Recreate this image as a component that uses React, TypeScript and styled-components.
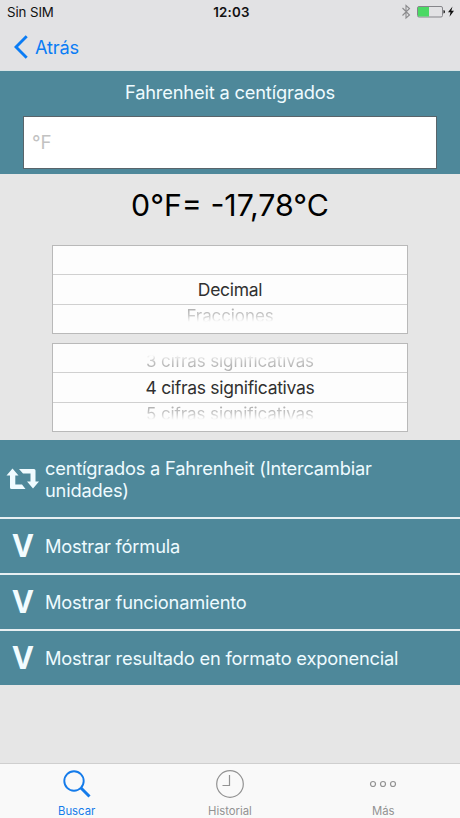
import React from "react";
import styled, { createGlobalStyle } from "styled-components";

const Global = createGlobalStyle`
  * { box-sizing: border-box; }
  body { margin: 0; background: #e6e6e6; }
`;

const Screen = styled.div`
  width: 460px;
  height: 818px;
  display: flex;
  flex-direction: column;
  background: #e6e6e6;
  font-family: Inter, "Liberation Sans", sans-serif;
  overflow: hidden;
`;

const TopArea = styled.header`
  height: 71px;
  background: #e2e2e4;
  border-bottom: 1px solid #d7e3e5;
`;

const StatusBar = styled.div`
  height: 24px;
  display: grid;
  grid-template-columns: 1fr auto 1fr;
  align-items: center;
  padding: 0 5px 0 7px;
  font-size: 13.3px;
  line-height: 24px;
  color: #111;
`;

const Carrier = styled.span`
  letter-spacing: -0.1px;
`;

const Clock = styled.span`
  padding-left: 1px;
  font-weight: 600;
  font-size: 13.3px;
  letter-spacing: 0.2px;
`;

const StatusIcons = styled.div`
  display: flex;
  justify-content: flex-end;
  align-items: center;
`;

const BackButton = styled.button`
  display: flex;
  align-items: center;
  gap: 7px;
  height: 46px;
  padding: 0 0 0 14px;
  border: 0;
  background: none;
  color: #0a7cf5;
  font: 400 18.2px/46px Inter, sans-serif;
  letter-spacing: -0.15px;
`;

const Converter = styled.section`
  height: 103px;
  background: #4e889a;
  padding: 9px 23px 0;
`;

const Title = styled.h1`
  margin: 0 0 12px;
  text-align: center;
  color: #eefbff;
  font-weight: 400;
  font-size: 18.3px;
  line-height: 24px;
  letter-spacing: -0.18px;
`;

const ValueInput = styled.input`
  display: block;
  width: 414px;
  height: 53px;
  padding: 0 8px;
  border: 1px solid #59646a;
  border-radius: 0;
  background: #fff;
  font: 400 18.7px Inter, sans-serif;
  outline: none;
  &::placeholder { color: #c2c2c2; opacity: 1; }
`;

const Result = styled.output`
  display: block;
  height: 71px;
  text-align: center;
  font-size: 30.3px;
  line-height: 63px;
  color: #000;
`;

const Picker = styled.div`
  width: 356px;
  height: 89px;
  margin: 0 auto 9px 52px;
  border: 1px solid #b9b9b9;
  background: #fdfdfd;
  display: grid;
  grid-template-rows: 28px 31px 28px;
`;

const Option = styled.div<{ $place: "above" | "current" | "below" }>`
  overflow: hidden;
  text-align: center;
  white-space: nowrap;
  font-size: ${(p) => (p.$place === "current" ? 17.5 : 17)}px;
  letter-spacing: ${(p) => (p.$place === "current" ? -0.3 : -0.1)}px;
  line-height: ${(p) => (p.$place === "above" ? 34 : p.$place === "below" ? 23 : 29)}px;
  color: ${(p) => (p.$place === "current" ? "#303030" : "transparent")};
  border-top: ${(p) => (p.$place === "current" ? "1px solid #d0d0d0" : "0")};
  border-bottom: ${(p) => (p.$place === "current" ? "1px solid #d0d0d0" : "0")};
  background-image: ${(p) =>
    p.$place === "above"
      ? "linear-gradient(to top, #b2b2b2 5px, #c8c8c8 11px, #fdfdfd 17px)"
      : p.$place === "below"
        ? "linear-gradient(to bottom, #b2b2b2 4px, #c8c8c8 10px, #fdfdfd 17px)"
        : "none"};
  -webkit-background-clip: ${(p) => (p.$place === "current" ? "border-box" : "text")};
  background-clip: ${(p) => (p.$place === "current" ? "border-box" : "text")};
`;

const Actions = styled.div`
  display: flex;
  flex-direction: column;
  gap: 2px;
  margin-top: -1px;
  background: #e7eff2;
`;

const Action = styled.button<{ $tall?: boolean }>`
  display: flex;
  align-items: center;
  height: ${(p) => (p.$tall ? 77 : 54)}px;
  padding: 0;
  border: 0;
  background: #4e889a;
  color: #eefbff;
  text-align: left;
  font: 400 18.3px/22px Inter, sans-serif;
`;

const ActionIcon = styled.span`
  width: 45px;
  flex: none;
  display: flex;
  justify-content: center;
  align-items: center;
`;

const ActionLabel = styled.span`
  width: 370px;
  letter-spacing: -0.21px;
`;

const Vee = styled.span`
  padding: 0 0 2px 1px;
  font: 700 32px/40px "Open Sans", sans-serif;
  color: #f2fcff;
`;

const TabBar = styled.nav`
  height: 55px;
  margin-top: auto;
  display: grid;
  grid-template-columns: repeat(3, 153.3px);
  background: #f9f9f9;
  border-top: 1px solid #cfcfcf;
`;

const Tab = styled.button<{ $active?: boolean }>`
  display: flex;
  flex-direction: column;
  align-items: center;
  padding: 4px 0 0;
  border: 0;
  background: none;
  color: ${(p) => (p.$active ? "#147bea" : "#929292")};
  font: 400 11.3px/14px Inter, sans-serif;
  letter-spacing: 0.02px;
`;

const TabIcon = styled.span`
  height: 32px;
  margin-bottom: 4px;
  display: flex;
  align-items: center;
`;

const SwapIcon = () => (
  <svg width="34" height="24" viewBox="0 0 34 24" fill="#f0fbff">
    <path d="M6.500 1.500 L12.500 8.500 H9.300 V17.500 H16 L19.500 22 H5.500 Q4 22 4 20.500 V8.500 H0.500Z" />
    <path d="M13 2 H28 Q29.500 2 29.500 3.500 V14.500 H33 L27 21.500 L21 14.500 H24.500 V6.500 H17Z" />
  </svg>
);

export default function App() {
  return (
    <>
      <Global />
      <Screen>
        <TopArea>
          <StatusBar>
            <Carrier>Sin SIM</Carrier>
            <Clock>12:03</Clock>
            <StatusIcons>
              <svg width="54" height="18" viewBox="401 3 54 18" fill="none">
                <path d="M402.500 8 L409.500 15 L406 18 V5.500 L409.500 8.500 L402.500 15.500" stroke="#8b8b8d" strokeWidth="1.100" />
                <rect x="417.500" y="6.500" width="25" height="10.500" rx="1.500" stroke="#85858a" />
                <path d="M418 7 H429 V16.500 H418Z" fill="#4bd964" />
                <path d="M443.500 10 Q445 10.300 445 11.800 T443.500 13.600Z" fill="#111" />
                <path d="M452.500 6.500 L448 12.300 H450.500 L449.500 16.800 L454 10.700 H451.300Z" fill="#111" />
              </svg>
            </StatusIcons>
          </StatusBar>
          <BackButton>
            <svg width="14" height="24" viewBox="0 0 14 24" fill="none">
              <path d="M12.700 1.300 L2 12 L12.700 22.700" stroke="currentColor" strokeWidth="2.900" />
            </svg>
            Atrás
          </BackButton>
        </TopArea>
        <Converter>
          <Title>Fahrenheit a centígrados</Title>
          <ValueInput placeholder="°F" aria-label="Fahrenheit" />
        </Converter>
        <Result>0°F= -17,78°C</Result>
        <Picker>
          <Option $place="above" />
          <Option $place="current">Decimal</Option>
          <Option $place="below">Fracciones</Option>
        </Picker>
        <Picker>
          <Option $place="above">3 cifras significativas</Option>
          <Option $place="current">4 cifras significativas</Option>
          <Option $place="below">5 cifras significativas</Option>
        </Picker>
        <Actions>
          <Action $tall>
            <ActionIcon><SwapIcon /></ActionIcon>
            <ActionLabel>centígrados a Fahrenheit (Intercambiar unidades)</ActionLabel>
          </Action>
          <Action>
            <ActionIcon><Vee>V</Vee></ActionIcon>
            <ActionLabel>Mostrar fórmula</ActionLabel>
          </Action>
          <Action>
            <ActionIcon><Vee>V</Vee></ActionIcon>
            <ActionLabel>Mostrar funcionamiento</ActionLabel>
          </Action>
          <Action>
            <ActionIcon><Vee>V</Vee></ActionIcon>
            <ActionLabel>Mostrar resultado en formato exponencial</ActionLabel>
          </Action>
        </Actions>
        <TabBar>
          <Tab $active>
            <TabIcon>
              <svg width="28" height="28" viewBox="0 0 28 28" fill="none" stroke="currentColor">
                <circle cx="11" cy="11" r="9.700" strokeWidth="1.900" />
                <path d="M18 18 L26.500 26.500" strokeWidth="3" />
              </svg>
            </TabIcon>
            Buscar
          </Tab>
          <Tab>
            <TabIcon>
              <svg width="28" height="28" viewBox="0 0 28 28" fill="none" stroke="currentColor">
                <circle cx="14" cy="14" r="13.300" strokeWidth="1.200" />
                <path d="M13.500 5 V15.500 H6.500" strokeWidth="1.200" />
              </svg>
            </TabIcon>
            Historial
          </Tab>
          <Tab>
            <TabIcon>
              <svg width="28" height="8" viewBox="0 0 28 8" fill="none" stroke="currentColor" strokeWidth="1.200">
                <circle cx="4" cy="4" r="2.500" />
                <circle cx="14" cy="4" r="2.500" />
                <circle cx="24" cy="4" r="2.500" />
              </svg>
            </TabIcon>
            Más
          </Tab>
        </TabBar>
      </Screen>
    </>
  );
}
